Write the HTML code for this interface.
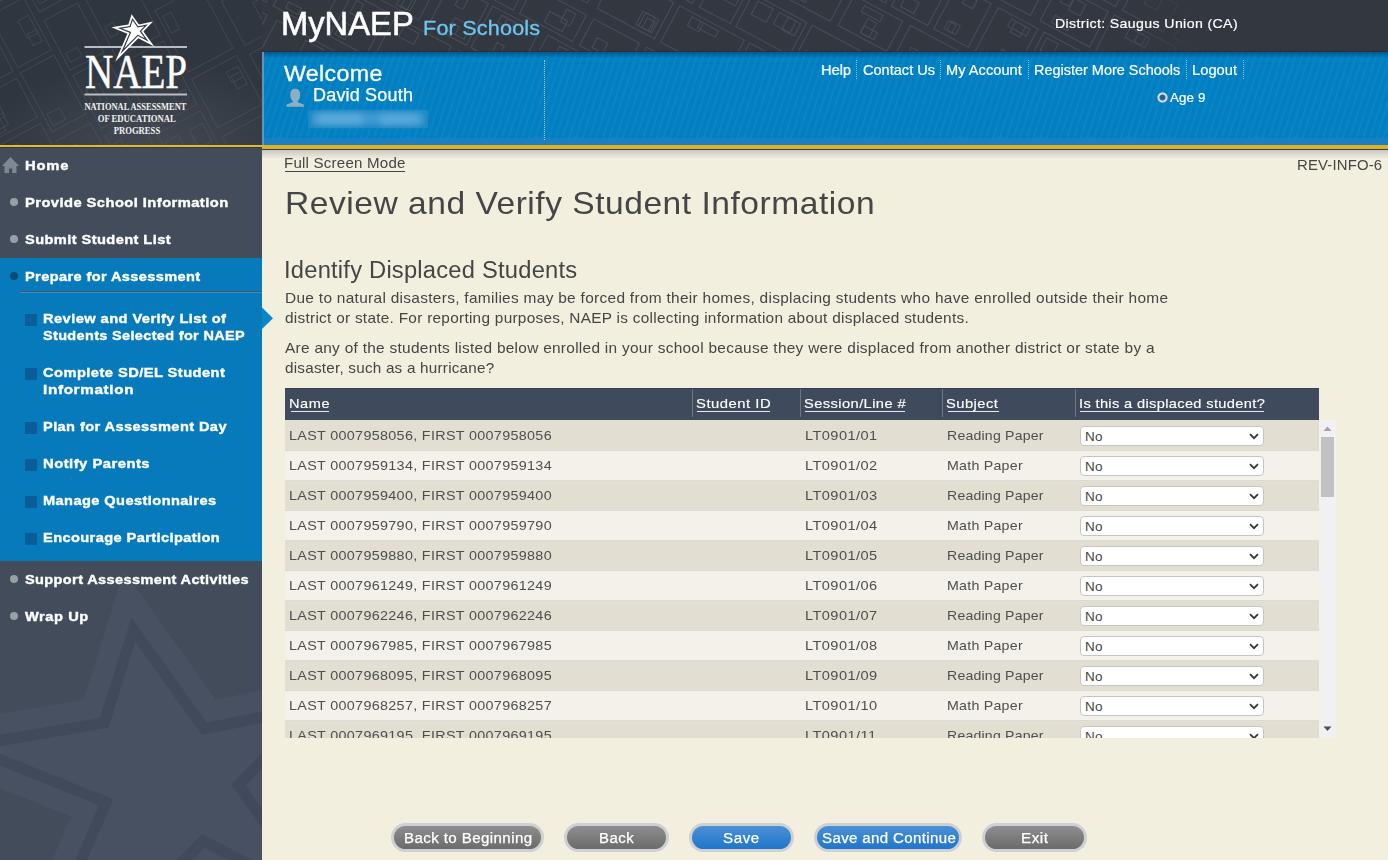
<!DOCTYPE html><html><head><meta charset="utf-8"><style>
*{margin:0;padding:0;box-sizing:border-box}
html,body{width:1388px;height:860px;overflow:hidden}
body{position:relative;background:#f3efdf;font-family:"Liberation Sans", sans-serif}
.t{position:absolute;white-space:nowrap;font-family:"Liberation Sans", sans-serif}
.a{position:absolute}
</style></head><body><div class="a" style="left:0;top:0;width:1388px;height:52px;background:#333840;overflow:hidden"><svg class="a" style="left:0;top:0" width="1388" height="52" viewBox="0 0 1388 52"><g transform="rotate(28)" fill="none" stroke="#474e58" stroke-width="1" opacity="1.0"><rect x="1241" y="-817" width="74" height="40"/><rect x="1254" y="-792" width="9" height="12"/><rect x="1279" y="-791" width="9" height="10"/><rect x="1268" y="-789" width="13" height="9"/><rect x="1142" y="-767" width="72" height="50"/><rect x="1154" y="-763" width="15" height="13"/><rect x="1175" y="-733" width="15" height="11"/><rect x="1153" y="-763" width="20" height="8"/><rect x="1223" y="-767" width="72" height="50"/><rect x="1256" y="-735" width="16" height="14"/><rect x="1242" y="-763" width="16" height="16"/><rect x="1236" y="-763" width="12" height="14"/><rect x="1005" y="-708" width="71" height="54"/><rect x="1054" y="-704" width="14" height="8"/><rect x="1035" y="-670" width="17" height="13"/><rect x="1045" y="-669" width="17" height="11"/><rect x="1086" y="-708" width="39" height="54"/><rect x="1095" y="-670" width="19" height="12"/><rect x="1132" y="-708" width="50" height="54"/><rect x="1160" y="-704" width="9" height="12"/><rect x="1191" y="-708" width="70" height="54"/><rect x="1212" y="-704" width="14" height="14"/><rect x="1220" y="-666" width="20" height="8"/><rect x="1271" y="-708" width="58" height="54"/><rect x="1302" y="-671" width="10" height="13"/><rect x="1296" y="-704" width="13" height="16"/><rect x="1296" y="-704" width="10" height="11"/><rect x="938" y="-643" width="50" height="36"/><rect x="947" y="-639" width="15" height="8"/><rect x="946" y="-639" width="14" height="9"/><rect x="997" y="-643" width="53" height="36"/><rect x="1013" y="-619" width="9" height="7"/><rect x="1055" y="-643" width="64" height="36"/><rect x="1097" y="-639" width="14" height="11"/><rect x="1130" y="-643" width="45" height="36"/><rect x="1141" y="-639" width="15" height="8"/><rect x="1141" y="-619" width="10" height="7"/><rect x="1185" y="-643" width="54" height="36"/><rect x="1214" y="-639" width="15" height="12"/><rect x="1191" y="-639" width="17" height="10"/><rect x="1247" y="-643" width="39" height="36"/><rect x="1251" y="-639" width="8" height="7"/><rect x="1261" y="-639" width="15" height="11"/><rect x="1254" y="-620" width="21" height="9"/><rect x="1294" y="-643" width="49" height="36"/><rect x="1300" y="-621" width="8" height="10"/><rect x="1312" y="-639" width="12" height="15"/><rect x="1302" y="-623" width="16" height="12"/><rect x="846" y="-602" width="68" height="42"/><rect x="875" y="-598" width="14" height="10"/><rect x="866" y="-598" width="14" height="14"/><rect x="871" y="-578" width="11" height="14"/><rect x="924" y="-602" width="59" height="42"/><rect x="941" y="-598" width="11" height="15"/><rect x="991" y="-602" width="38" height="42"/><rect x="1008" y="-598" width="13" height="14"/><rect x="1041" y="-602" width="74" height="42"/><rect x="1064" y="-578" width="14" height="13"/><rect x="1072" y="-577" width="11" height="13"/><rect x="1059" y="-598" width="19" height="11"/><rect x="1127" y="-602" width="42" height="42"/><rect x="1147" y="-598" width="8" height="8"/><rect x="1174" y="-602" width="65" height="42"/><rect x="1210" y="-572" width="15" height="7"/><rect x="1195" y="-598" width="18" height="10"/><rect x="1251" y="-602" width="53" height="42"/><rect x="1288" y="-579" width="10" height="14"/><rect x="1315" y="-602" width="70" height="42"/><rect x="1339" y="-576" width="21" height="11"/><rect x="1331" y="-574" width="22" height="9"/><rect x="753" y="-549" width="69" height="31"/><rect x="770" y="-545" width="21" height="13"/><rect x="770" y="-545" width="16" height="8"/><rect x="832" y="-549" width="71" height="31"/><rect x="862" y="-545" width="14" height="8"/><rect x="915" y="-549" width="73" height="31"/><rect x="928" y="-532" width="14" height="10"/><rect x="921" y="-536" width="13" height="14"/><rect x="936" y="-529" width="11" height="7"/><rect x="996" y="-549" width="46" height="31"/><rect x="1012" y="-545" width="14" height="11"/><rect x="1054" y="-549" width="64" height="31"/><rect x="1084" y="-545" width="15" height="14"/><rect x="1094" y="-529" width="19" height="7"/><rect x="1076" y="-533" width="18" height="11"/><rect x="1126" y="-549" width="57" height="31"/><rect x="1135" y="-545" width="11" height="16"/><rect x="1193" y="-549" width="63" height="31"/><rect x="1211" y="-545" width="17" height="13"/><rect x="1205" y="-535" width="11" height="13"/><rect x="1266" y="-549" width="70" height="31"/><rect x="1288" y="-545" width="15" height="8"/><rect x="1342" y="-549" width="51" height="31"/><rect x="1355" y="-545" width="12" height="8"/><rect x="690" y="-510" width="45" height="40"/><rect x="700" y="-485" width="22" height="11"/><rect x="712" y="-482" width="19" height="9"/><rect x="741" y="-510" width="52" height="40"/><rect x="750" y="-506" width="20" height="14"/><rect x="756" y="-506" width="13" height="9"/><rect x="759" y="-506" width="11" height="12"/><rect x="804" y="-510" width="63" height="40"/><rect x="826" y="-484" width="8" height="10"/><rect x="832" y="-506" width="13" height="13"/><rect x="873" y="-510" width="44" height="40"/><rect x="883" y="-506" width="9" height="7"/><rect x="889" y="-506" width="14" height="9"/><rect x="928" y="-510" width="56" height="40"/><rect x="948" y="-506" width="13" height="13"/><rect x="939" y="-482" width="18" height="8"/><rect x="937" y="-506" width="10" height="10"/><rect x="991" y="-510" width="70" height="40"/><rect x="1021" y="-506" width="8" height="10"/><rect x="1011" y="-506" width="22" height="11"/><rect x="1070" y="-510" width="52" height="40"/><rect x="1076" y="-483" width="21" height="10"/><rect x="1075" y="-506" width="22" height="13"/><rect x="1075" y="-487" width="20" height="14"/><rect x="1127" y="-510" width="54" height="40"/><rect x="1150" y="-482" width="17" height="8"/><rect x="1136" y="-483" width="20" height="9"/><rect x="1189" y="-510" width="39" height="40"/><rect x="1202" y="-506" width="15" height="15"/><rect x="1211" y="-483" width="9" height="9"/><rect x="1203" y="-484" width="21" height="11"/><rect x="1237" y="-510" width="56" height="40"/><rect x="1260" y="-506" width="16" height="10"/><rect x="590" y="-462" width="60" height="49"/><rect x="595" y="-429" width="20" height="11"/><rect x="657" y="-462" width="60" height="49"/><rect x="686" y="-431" width="9" height="14"/><rect x="696" y="-427" width="17" height="10"/><rect x="691" y="-431" width="20" height="14"/><rect x="726" y="-462" width="57" height="49"/><rect x="738" y="-458" width="14" height="10"/><rect x="752" y="-430" width="18" height="12"/><rect x="790" y="-462" width="41" height="49"/><rect x="798" y="-429" width="15" height="12"/><rect x="809" y="-458" width="14" height="12"/><rect x="803" y="-458" width="16" height="13"/><rect x="838" y="-462" width="39" height="49"/><rect x="850" y="-428" width="10" height="10"/><rect x="847" y="-427" width="9" height="9"/><rect x="851" y="-458" width="12" height="9"/><rect x="885" y="-462" width="45" height="49"/><rect x="907" y="-458" width="11" height="12"/><rect x="908" y="-427" width="11" height="9"/><rect x="902" y="-458" width="21" height="8"/><rect x="937" y="-462" width="53" height="49"/><rect x="942" y="-458" width="13" height="14"/><rect x="999" y="-462" width="75" height="49"/><rect x="1030" y="-432" width="13" height="15"/><rect x="1083" y="-462" width="52" height="49"/><rect x="1092" y="-429" width="12" height="12"/><rect x="1095" y="-458" width="8" height="11"/><rect x="1146" y="-462" width="55" height="49"/><rect x="1157" y="-431" width="20" height="14"/><rect x="477" y="-405" width="73" height="34"/><rect x="536" y="-387" width="10" height="12"/><rect x="488" y="-385" width="10" height="10"/><rect x="518" y="-401" width="15" height="11"/><rect x="560" y="-405" width="36" height="34"/><rect x="576" y="-382" width="15" height="7"/><rect x="601" y="-405" width="62" height="34"/><rect x="633" y="-387" width="19" height="11"/><rect x="645" y="-387" width="12" height="12"/><rect x="669" y="-405" width="74" height="34"/><rect x="701" y="-384" width="11" height="8"/><rect x="752" y="-405" width="55" height="34"/><rect x="775" y="-391" width="10" height="16"/><rect x="766" y="-401" width="21" height="7"/><rect x="775" y="-383" width="15" height="8"/><rect x="816" y="-405" width="54" height="34"/><rect x="838" y="-385" width="21" height="10"/><rect x="827" y="-386" width="12" height="11"/><rect x="854" y="-384" width="9" height="9"/><rect x="877" y="-405" width="43" height="34"/><rect x="893" y="-401" width="16" height="13"/><rect x="897" y="-401" width="11" height="9"/><rect x="932" y="-405" width="53" height="34"/><rect x="945" y="-387" width="20" height="12"/><rect x="945" y="-385" width="19" height="10"/><rect x="995" y="-405" width="46" height="34"/><rect x="1017" y="-401" width="10" height="15"/><rect x="1051" y="-405" width="39" height="34"/><rect x="1065" y="-385" width="15" height="10"/><rect x="1070" y="-401" width="15" height="8"/><rect x="397" y="-359" width="49" height="37"/><rect x="415" y="-355" width="19" height="9"/><rect x="412" y="-335" width="10" height="9"/><rect x="425" y="-355" width="10" height="10"/><rect x="455" y="-359" width="38" height="37"/><rect x="470" y="-333" width="16" height="7"/><rect x="459" y="-340" width="14" height="14"/><rect x="503" y="-359" width="50" height="37"/><rect x="533" y="-355" width="12" height="15"/><rect x="528" y="-336" width="13" height="10"/><rect x="565" y="-359" width="48" height="37"/><rect x="571" y="-337" width="15" height="11"/><rect x="587" y="-355" width="12" height="9"/><rect x="578" y="-340" width="10" height="14"/><rect x="621" y="-359" width="35" height="37"/><rect x="632" y="-355" width="20" height="15"/><rect x="662" y="-359" width="61" height="37"/><rect x="704" y="-355" width="14" height="14"/><rect x="670" y="-355" width="17" height="15"/><rect x="694" y="-355" width="19" height="13"/><rect x="729" y="-359" width="61" height="37"/><rect x="735" y="-334" width="19" height="7"/><rect x="800" y="-359" width="72" height="37"/><rect x="843" y="-337" width="13" height="11"/><rect x="882" y="-359" width="36" height="37"/><rect x="888" y="-355" width="18" height="13"/><rect x="927" y="-359" width="40" height="37"/><rect x="933" y="-338" width="14" height="12"/><rect x="932" y="-340" width="18" height="14"/><rect x="977" y="-359" width="57" height="37"/><rect x="991" y="-337" width="14" height="11"/><rect x="992" y="-355" width="13" height="14"/><rect x="316" y="-314" width="63" height="41"/><rect x="347" y="-310" width="16" height="7"/><rect x="335" y="-310" width="12" height="12"/><rect x="325" y="-287" width="19" height="10"/><rect x="387" y="-314" width="63" height="41"/><rect x="429" y="-310" width="14" height="11"/><rect x="460" y="-314" width="60" height="41"/><rect x="471" y="-310" width="14" height="10"/><rect x="477" y="-310" width="19" height="8"/><rect x="531" y="-314" width="65" height="41"/><rect x="580" y="-288" width="9" height="11"/><rect x="576" y="-292" width="11" height="15"/><rect x="573" y="-292" width="18" height="15"/><rect x="603" y="-314" width="73" height="41"/><rect x="619" y="-310" width="13" height="10"/><rect x="629" y="-310" width="20" height="7"/><rect x="682" y="-314" width="58" height="41"/><rect x="711" y="-291" width="22" height="14"/><rect x="725" y="-291" width="10" height="14"/><rect x="750" y="-314" width="51" height="41"/><rect x="779" y="-285" width="13" height="8"/><rect x="809" y="-314" width="47" height="41"/><rect x="816" y="-287" width="17" height="10"/><rect x="836" y="-284" width="13" height="8"/><rect x="817" y="-310" width="19" height="10"/><rect x="866" y="-314" width="51" height="41"/><rect x="879" y="-310" width="17" height="9"/><rect x="209" y="-262" width="66" height="30"/><rect x="253" y="-258" width="14" height="12"/><rect x="285" y="-262" width="43" height="30"/><rect x="301" y="-258" width="19" height="8"/><rect x="293" y="-258" width="16" height="10"/><rect x="335" y="-262" width="63" height="30"/><rect x="344" y="-258" width="20" height="12"/><rect x="404" y="-262" width="54" height="30"/><rect x="424" y="-258" width="20" height="8"/><rect x="425" y="-258" width="20" height="10"/><rect x="465" y="-262" width="60" height="30"/><rect x="505" y="-258" width="10" height="14"/><rect x="491" y="-248" width="20" height="12"/><rect x="533" y="-262" width="52" height="30"/><rect x="545" y="-247" width="12" height="11"/><rect x="593" y="-262" width="69" height="30"/><rect x="625" y="-258" width="18" height="15"/><rect x="602" y="-258" width="20" height="12"/><rect x="598" y="-251" width="19" height="15"/><rect x="670" y="-262" width="68" height="30"/><rect x="678" y="-258" width="14" height="14"/><rect x="685" y="-258" width="15" height="14"/><rect x="693" y="-250" width="19" height="14"/><rect x="748" y="-262" width="47" height="30"/><rect x="753" y="-258" width="19" height="10"/><rect x="802" y="-262" width="36" height="30"/><rect x="818" y="-243" width="12" height="7"/><rect x="157" y="-226" width="64" height="47"/><rect x="187" y="-192" width="18" height="10"/><rect x="228" y="-226" width="40" height="47"/><rect x="239" y="-190" width="18" height="7"/><rect x="278" y="-226" width="50" height="47"/><rect x="290" y="-222" width="19" height="8"/><rect x="285" y="-222" width="20" height="11"/><rect x="337" y="-226" width="42" height="47"/><rect x="357" y="-195" width="10" height="12"/><rect x="352" y="-195" width="12" height="13"/><rect x="390" y="-226" width="43" height="47"/><rect x="410" y="-198" width="18" height="15"/><rect x="410" y="-192" width="8" height="9"/><rect x="404" y="-222" width="9" height="13"/><rect x="438" y="-226" width="53" height="47"/><rect x="457" y="-222" width="10" height="11"/><rect x="450" y="-222" width="15" height="8"/><rect x="459" y="-196" width="8" height="13"/><rect x="500" y="-226" width="52" height="47"/><rect x="516" y="-222" width="13" height="11"/><rect x="562" y="-226" width="68" height="47"/><rect x="589" y="-197" width="20" height="14"/><rect x="642" y="-226" width="71" height="47"/><rect x="663" y="-222" width="14" height="10"/><rect x="42" y="-171" width="70" height="48"/><rect x="55" y="-135" width="21" height="8"/><rect x="80" y="-167" width="22" height="8"/><rect x="120" y="-171" width="55" height="48"/><rect x="135" y="-137" width="20" height="10"/><rect x="143" y="-167" width="18" height="15"/><rect x="180" y="-171" width="56" height="48"/><rect x="192" y="-136" width="18" height="8"/><rect x="244" y="-171" width="52" height="48"/><rect x="256" y="-134" width="14" height="7"/><rect x="308" y="-171" width="41" height="48"/><rect x="315" y="-167" width="8" height="14"/><rect x="312" y="-142" width="11" height="15"/><rect x="357" y="-171" width="63" height="48"/><rect x="388" y="-136" width="19" height="9"/><rect x="369" y="-167" width="17" height="12"/><rect x="387" y="-141" width="11" height="14"/><rect x="429" y="-171" width="61" height="48"/><rect x="439" y="-139" width="18" height="11"/><rect x="497" y="-171" width="38" height="48"/><rect x="508" y="-139" width="12" height="12"/><rect x="541" y="-171" width="58" height="48"/><rect x="557" y="-167" width="10" height="16"/><rect x="561" y="-167" width="20" height="11"/><rect x="606" y="-171" width="49" height="48"/><rect x="613" y="-143" width="21" height="15"/><rect x="612" y="-136" width="11" height="9"/><rect x="-87" y="-112" width="69" height="54"/><rect x="-66" y="-72" width="14" height="10"/><rect x="-81" y="-108" width="18" height="8"/><rect x="-55" y="-72" width="9" height="10"/><rect x="-9" y="-112" width="64" height="54"/><rect x="10" y="-108" width="8" height="15"/><rect x="4" y="-72" width="17" height="10"/><rect x="66" y="-112" width="51" height="54"/><rect x="92" y="-71" width="19" height="9"/><rect x="74" y="-108" width="11" height="9"/><rect x="127" y="-112" width="72" height="54"/><rect x="154" y="-108" width="18" height="11"/><rect x="166" y="-70" width="15" height="8"/><rect x="206" y="-112" width="37" height="54"/><rect x="216" y="-108" width="20" height="8"/><rect x="254" y="-112" width="65" height="54"/><rect x="289" y="-108" width="20" height="16"/><rect x="329" y="-112" width="66" height="54"/><rect x="339" y="-70" width="14" height="7"/><rect x="345" y="-75" width="16" height="13"/><rect x="373" y="-70" width="11" height="8"/><rect x="405" y="-112" width="70" height="54"/><rect x="453" y="-74" width="15" height="12"/><rect x="484" y="-112" width="61" height="54"/><rect x="504" y="-72" width="12" height="10"/><rect x="-156" y="-52" width="38" height="30"/><rect x="-138" y="-48" width="16" height="8"/><rect x="-139" y="-42" width="13" height="16"/><rect x="-141" y="-34" width="16" height="8"/><rect x="-109" y="-52" width="57" height="30"/><rect x="-78" y="-36" width="20" height="10"/><rect x="-98" y="-48" width="16" height="7"/><rect x="-86" y="-36" width="21" height="10"/><rect x="-47" y="-52" width="56" height="30"/><rect x="-34" y="-48" width="13" height="9"/><rect x="-15" y="-48" width="15" height="16"/><rect x="-36" y="-36" width="17" height="10"/><rect x="20" y="-52" width="51" height="30"/><rect x="48" y="-48" width="9" height="13"/><rect x="82" y="-52" width="68" height="30"/><rect x="89" y="-48" width="13" height="12"/><rect x="106" y="-48" width="16" height="14"/><rect x="96" y="-39" width="20" height="13"/><rect x="160" y="-52" width="69" height="30"/><rect x="167" y="-38" width="10" height="12"/><rect x="238" y="-52" width="39" height="30"/><rect x="244" y="-48" width="14" height="9"/><rect x="249" y="-36" width="21" height="10"/><rect x="285" y="-52" width="64" height="30"/><rect x="315" y="-36" width="20" height="10"/><rect x="330" y="-48" width="9" height="11"/><rect x="324" y="-34" width="13" height="8"/><rect x="356" y="-52" width="38" height="30"/><rect x="362" y="-34" width="21" height="8"/><rect x="362" y="-39" width="15" height="13"/><rect x="404" y="-52" width="42" height="30"/><rect x="418" y="-48" width="17" height="14"/><rect x="415" y="-48" width="15" height="15"/><rect x="-137" y="-16" width="55" height="53"/><rect x="-125" y="-12" width="14" height="13"/><rect x="-132" y="-12" width="21" height="11"/><rect x="-124" y="24" width="20" height="9"/><rect x="-75" y="-16" width="36" height="53"/><rect x="-62" y="21" width="12" height="12"/><rect x="-30" y="-16" width="71" height="53"/><rect x="10" y="-12" width="13" height="13"/><rect x="-9" y="-12" width="14" height="9"/><rect x="50" y="-16" width="38" height="53"/><rect x="56" y="-12" width="22" height="8"/><rect x="64" y="-12" width="17" height="9"/><rect x="98" y="-16" width="47" height="53"/><rect x="106" y="26" width="11" height="7"/><rect x="108" y="18" width="20" height="15"/><rect x="116" y="22" width="10" height="11"/><rect x="155" y="-16" width="44" height="53"/><rect x="167" y="25" width="12" height="9"/><rect x="207" y="-16" width="62" height="53"/><rect x="233" y="19" width="21" height="14"/><rect x="213" y="-12" width="13" height="10"/><rect x="277" y="-16" width="69" height="53"/><rect x="310" y="-12" width="13" height="13"/><rect x="328" y="-12" width="14" height="14"/><rect x="-94" y="46" width="63" height="33"/><rect x="-79" y="50" width="14" height="14"/><rect x="-22" y="46" width="43" height="33"/><rect x="-9" y="50" width="8" height="10"/><rect x="28" y="46" width="41" height="33"/><rect x="33" y="50" width="20" height="10"/><rect x="48" y="50" width="16" height="16"/><rect x="74" y="46" width="61" height="33"/><rect x="106" y="50" width="16" height="8"/><rect x="146" y="46" width="40" height="33"/><rect x="158" y="58" width="15" height="16"/><rect x="192" y="46" width="36" height="33"/><rect x="204" y="64" width="18" height="10"/><rect x="213" y="61" width="8" height="14"/><rect x="207" y="50" width="14" height="12"/><rect x="-91" y="88" width="40" height="52"/><rect x="-86" y="92" width="22" height="15"/><rect x="-43" y="88" width="62" height="52"/><rect x="-36" y="124" width="20" height="12"/><rect x="-12" y="92" width="18" height="7"/><rect x="-4" y="121" width="14" height="15"/><rect x="30" y="88" width="42" height="52"/><rect x="38" y="128" width="14" height="8"/><rect x="40" y="126" width="20" height="10"/><rect x="82" y="88" width="64" height="52"/><rect x="114" y="92" width="14" height="11"/><rect x="-9" y="148" width="55" height="35"/><rect x="-4" y="152" width="12" height="7"/></g></svg><div class="a" style="left:1120px;top:0;width:268px;height:52px;background:linear-gradient(90deg,rgba(51,56,64,0),#333840 80px)"></div></div>
<div class="a" style="left:0;top:0;width:262px;height:145px;background:radial-gradient(ellipse 170px 90px at 150px 150px,#444a54 0%,#30363f 100%);overflow:hidden"><svg class="a" style="left:0;top:0" width="262" height="145" viewBox="0 0 262 145"><g transform="rotate(62)" fill="none" stroke="#59606b" stroke-width="1" opacity="0.38"><rect x="59" y="-354" width="48" height="47"/><rect x="91" y="-327" width="12" height="15"/><rect x="80" y="-350" width="10" height="15"/><rect x="114" y="-354" width="71" height="47"/><rect x="132" y="-350" width="16" height="8"/><rect x="154" y="-321" width="21" height="9"/><rect x="-22" y="-297" width="67" height="45"/><rect x="-18" y="-269" width="20" height="12"/><rect x="51" y="-297" width="47" height="45"/><rect x="79" y="-267" width="10" height="11"/><rect x="56" y="-293" width="14" height="10"/><rect x="103" y="-297" width="71" height="45"/><rect x="152" y="-265" width="13" height="8"/><rect x="118" y="-293" width="11" height="15"/><rect x="185" y="-297" width="49" height="45"/><rect x="207" y="-293" width="8" height="13"/><rect x="209" y="-293" width="11" height="16"/><rect x="242" y="-297" width="68" height="45"/><rect x="259" y="-293" width="20" height="13"/><rect x="249" y="-271" width="21" height="14"/><rect x="2" y="-242" width="38" height="47"/><rect x="14" y="-238" width="16" height="12"/><rect x="45" y="-242" width="52" height="47"/><rect x="73" y="-211" width="12" height="13"/><rect x="60" y="-238" width="15" height="13"/><rect x="51" y="-210" width="11" height="11"/><rect x="105" y="-242" width="50" height="47"/><rect x="121" y="-238" width="18" height="16"/><rect x="165" y="-242" width="74" height="47"/><rect x="169" y="-238" width="18" height="12"/><rect x="247" y="-242" width="56" height="47"/><rect x="283" y="-208" width="14" height="10"/><rect x="315" y="-242" width="62" height="47"/><rect x="329" y="-238" width="19" height="14"/><rect x="340" y="-213" width="10" height="15"/><rect x="350" y="-209" width="21" height="10"/><rect x="-55" y="-183" width="49" height="51"/><rect x="-47" y="-179" width="12" height="10"/><rect x="5" y="-183" width="65" height="51"/><rect x="36" y="-150" width="16" height="14"/><rect x="41" y="-150" width="9" height="15"/><rect x="82" y="-183" width="70" height="51"/><rect x="91" y="-145" width="19" height="9"/><rect x="160" y="-183" width="55" height="51"/><rect x="170" y="-179" width="12" height="13"/><rect x="176" y="-179" width="14" height="11"/><rect x="225" y="-183" width="56" height="51"/><rect x="245" y="-179" width="13" height="11"/><rect x="254" y="-150" width="12" height="15"/><rect x="265" y="-146" width="8" height="11"/><rect x="292" y="-183" width="46" height="51"/><rect x="312" y="-148" width="15" height="12"/><rect x="302" y="-179" width="20" height="8"/><rect x="349" y="-183" width="58" height="51"/><rect x="365" y="-151" width="19" height="15"/><rect x="374" y="-179" width="13" height="15"/><rect x="-90" y="-125" width="48" height="49"/><rect x="-73" y="-94" width="20" height="14"/><rect x="-36" y="-125" width="65" height="49"/><rect x="-8" y="-88" width="19" height="8"/><rect x="-11" y="-121" width="12" height="13"/><rect x="39" y="-125" width="67" height="49"/><rect x="73" y="-89" width="12" height="9"/><rect x="113" y="-125" width="72" height="49"/><rect x="166" y="-121" width="9" height="13"/><rect x="192" y="-125" width="49" height="49"/><rect x="214" y="-88" width="22" height="8"/><rect x="204" y="-121" width="20" height="15"/><rect x="203" y="-94" width="12" height="14"/><rect x="251" y="-125" width="51" height="49"/><rect x="267" y="-121" width="22" height="11"/><rect x="313" y="-125" width="41" height="49"/><rect x="329" y="-92" width="20" height="12"/><rect x="-104" y="-67" width="42" height="38"/><rect x="-97" y="-63" width="18" height="12"/><rect x="-56" y="-67" width="41" height="38"/><rect x="-41" y="-41" width="11" height="7"/><rect x="-51" y="-63" width="14" height="10"/><rect x="-9" y="-67" width="38" height="38"/><rect x="5" y="-50" width="10" height="16"/><rect x="2" y="-63" width="21" height="11"/><rect x="13" y="-44" width="9" height="11"/><rect x="39" y="-67" width="56" height="38"/><rect x="78" y="-46" width="10" height="13"/><rect x="101" y="-67" width="60" height="38"/><rect x="120" y="-48" width="20" height="15"/><rect x="120" y="-42" width="16" height="8"/><rect x="169" y="-67" width="68" height="38"/><rect x="198" y="-63" width="11" height="12"/><rect x="187" y="-46" width="8" height="13"/><rect x="180" y="-41" width="9" height="7"/><rect x="245" y="-67" width="75" height="38"/><rect x="299" y="-42" width="17" height="9"/><rect x="289" y="-63" width="14" height="15"/><rect x="288" y="-63" width="21" height="8"/><rect x="-125" y="-22" width="53" height="38"/><rect x="-112" y="4" width="10" height="8"/><rect x="-93" y="2" width="16" height="10"/><rect x="-87" y="-18" width="9" height="13"/><rect x="-64" y="-22" width="65" height="38"/><rect x="-41" y="-1" width="11" height="13"/><rect x="-47" y="1" width="12" height="11"/><rect x="-59" y="-18" width="18" height="13"/><rect x="9" y="-22" width="59" height="38"/><rect x="43" y="-18" width="13" height="10"/><rect x="27" y="-18" width="20" height="12"/><rect x="74" y="-22" width="67" height="38"/><rect x="123" y="-2" width="13" height="14"/><rect x="151" y="-22" width="70" height="38"/><rect x="163" y="0" width="17" height="11"/><rect x="201" y="-18" width="15" height="11"/><rect x="173" y="-4" width="22" height="16"/><rect x="228" y="-22" width="57" height="38"/><rect x="249" y="4" width="22" height="8"/><rect x="-172" y="22" width="61" height="45"/><rect x="-144" y="26" width="13" height="11"/><rect x="-144" y="48" width="15" height="15"/><rect x="-103" y="22" width="59" height="45"/><rect x="-85" y="52" width="13" height="11"/><rect x="-35" y="22" width="48" height="45"/><rect x="-26" y="26" width="9" height="15"/><rect x="21" y="22" width="48" height="45"/><rect x="32" y="26" width="17" height="13"/><rect x="77" y="22" width="44" height="45"/><rect x="90" y="50" width="15" height="14"/><rect x="96" y="56" width="22" height="7"/><rect x="101" y="51" width="13" height="12"/><rect x="128" y="22" width="66" height="45"/><rect x="135" y="52" width="12" height="11"/><rect x="199" y="22" width="45" height="45"/><rect x="210" y="48" width="19" height="15"/><rect x="213" y="26" width="12" height="13"/><rect x="251" y="22" width="45" height="45"/><rect x="271" y="49" width="12" height="14"/><rect x="-64" y="77" width="50" height="40"/><rect x="-43" y="81" width="11" height="15"/><rect x="-52" y="98" width="22" height="15"/><rect x="-38" y="81" width="10" height="9"/><rect x="-5" y="77" width="41" height="40"/><rect x="5" y="104" width="13" height="8"/><rect x="17" y="97" width="10" height="16"/><rect x="22" y="81" width="9" height="14"/><rect x="47" y="77" width="65" height="40"/><rect x="93" y="81" width="10" height="14"/><rect x="54" y="100" width="21" height="13"/><rect x="122" y="77" width="67" height="40"/><rect x="130" y="99" width="20" height="14"/><rect x="156" y="104" width="13" height="9"/><rect x="149" y="101" width="12" height="12"/><rect x="196" y="77" width="46" height="40"/><rect x="203" y="104" width="21" height="8"/><rect x="210" y="81" width="20" height="15"/><rect x="-4" y="126" width="56" height="33"/><rect x="-0" y="130" width="19" height="13"/><rect x="32" y="141" width="9" height="14"/><rect x="13" y="145" width="14" height="10"/><rect x="63" y="126" width="45" height="33"/><rect x="77" y="143" width="16" height="12"/><rect x="115" y="126" width="61" height="33"/><rect x="138" y="147" width="10" height="8"/><rect x="129" y="130" width="11" height="15"/><rect x="186" y="126" width="45" height="33"/><rect x="194" y="130" width="16" height="12"/><rect x="209" y="145" width="11" height="10"/><rect x="204" y="130" width="11" height="7"/><rect x="76" y="165" width="37" height="33"/><rect x="100" y="169" width="9" height="11"/><rect x="118" y="165" width="52" height="33"/><rect x="127" y="169" width="17" height="8"/><rect x="134" y="169" width="8" height="10"/></g></svg></div>
<svg class="a" style="left:70px;top:5px" width="130" height="140" viewBox="70 5 130 140">
<rect x="84.5" y="46" width="102.5" height="2" fill="#b9bcc1"/>
<rect x="84.5" y="93.5" width="102.5" height="2" fill="#b9bcc1"/>
<polygon points="131.60,14.20 138.90,24.40 153.00,21.50 143.40,31.40 154.30,46.50 138.30,38.20 115.20,61.80 127.40,33.70 111.40,27.30 128.40,24.40" fill="#ffffff"/>
<polygon points="132.20,17.96 138.16,26.29 147.94,24.28 141.19,31.24 148.74,41.70 137.97,36.11 120.43,54.03 129.66,32.77 117.63,27.96 129.71,25.90" fill="#333944"/>
<polygon points="132.63,20.62 137.64,27.62 144.37,26.24 139.63,31.13 144.81,38.31 137.73,34.64 124.12,48.54 131.25,32.12 122.03,28.43 130.64,26.96" fill="#ffffff"/>
<text x="84.9" y="87.7" font-family="Liberation Serif" font-size="47.5" fill="#fbfbfb" stroke="#fbfbfb" stroke-width="0.45" textLength="102.2" lengthAdjust="spacingAndGlyphs">NAEP</text>
<text x="84.4" y="110.1" font-family="Liberation Serif" font-weight="bold" font-size="9.3" fill="#f2f2f2" textLength="102" lengthAdjust="spacingAndGlyphs">NATIONAL ASSESSMENT</text>
<text x="97.7" y="122" font-family="Liberation Serif" font-weight="bold" font-size="9.3" fill="#f2f2f2" textLength="78.2" lengthAdjust="spacingAndGlyphs">OF EDUCATIONAL</text>
<text x="113.7" y="133.6" font-family="Liberation Serif" font-weight="bold" font-size="9.3" fill="#f2f2f2" textLength="46.5" lengthAdjust="spacingAndGlyphs">PROGRESS</text>
</svg>
<div class="a" style="left:262px;top:52px;width:1126px;height:86px;background-color:#027fc1;background-image:repeating-linear-gradient(108deg,rgba(255,255,255,0) 0px,rgba(255,255,255,0) 3.6px,rgba(40,175,240,0.13) 4.4px,rgba(40,175,240,0.13) 5.6px,rgba(255,255,255,0) 6.4px)"></div>
<div class="a" style="left:262px;top:51px;width:1126px;height:1px;background:#2d3038"></div>
<div class="a" style="left:262px;top:52px;width:1126px;height:6px;background:linear-gradient(rgba(0,30,60,0.4),rgba(0,30,60,0))"></div>
<div class="a" style="left:262px;top:138px;width:1126px;height:7px;background:#1a80c1"></div>
<div class="a" style="left:262px;top:52px;width:2px;height:93px;background:#5e95bf"></div>
<div class="a" style="left:544px;top:60px;width:0;height:80px;border-left:1px dotted #9ccbea"></div>
<div class="a" style="left:0;top:145px;width:262px;height:2px;background:#e8b921"></div>
<div class="a" style="left:0;top:147px;width:262px;height:1px;background:#2b3a55"></div>
<div class="a" style="left:262px;top:145px;width:1126px;height:4px;background:#dcb227"></div>
<div class="a" style="left:262px;top:149px;width:1126px;height:1px;background:#3c4044"></div>
<div class="a" style="left:262px;top:150px;width:1126px;height:9px;background:linear-gradient(#c6c7c6,#f3efdf)"></div>
<div class="a" style="left:0;top:148px;width:262px;height:712px;background:#434c5b;overflow:hidden"><svg class="a" style="left:0;top:0" width="262" height="712" viewBox="0 148 262 712">
<polygon points="124.00,571.00 215.98,699.52 393.64,662.98 272.68,787.72 410.02,977.98 208.42,873.40 -82.64,1170.76 71.08,816.70 -130.52,736.06 83.68,699.52" fill="#475162"/>
<polygon points="131.43,617.47 206.84,722.84 331.13,697.28 245.35,785.74 341.32,918.68 204.29,847.60 -18.07,1074.77 98.95,805.23 -53.54,744.23 99.87,718.06" fill="#414a5a"/>
<polygon points="135.32,641.81 202.06,735.05 298.39,715.24 231.03,784.70 305.33,887.62 202.12,834.08 15.75,1024.49 113.55,799.22 -13.22,748.51 108.35,727.77" fill="#475162"/>
</svg></div>
<div class="a" style="left:0;top:258px;width:262px;height:303px;background:#077abc"></div>
<div class="a" style="left:20px;top:291px;width:242px;height:1px;background:#45586a"></div>
<div class="a" style="left:20px;top:292px;width:242px;height:1px;background:#3b8dc4"></div>
<svg class="a" style="left:262px;top:307px" width="12" height="23" viewBox="0 0 12 23"><polygon points="0,0.5 11,11.3 0,22" fill="#0887ca"/></svg>
<svg class="a" style="left:2px;top:157px" width="17" height="16" viewBox="0 0 17 16"><polygon points="8.5,0 17,9 14.5,9 14.5,16 10.2,16 10.2,11.5 7,11.5 7,16 2.5,16 2.5,9 0,9" fill="#7f8793"/></svg>
<div class="t" style="left:24.90px;top:159px;font-size:13.5px;line-height:13.5px;color:#ffffff;font-weight:bold;letter-spacing:0.751px;transform:scaleX(1.0953);transform-origin:0 0;-webkit-text-stroke:0.4px #fff;">Home</div>
<div class="t" style="left:24.91px;top:196px;font-size:13.5px;line-height:13.5px;color:#ffffff;font-weight:bold;letter-spacing:0.409px;transform:scaleX(1.0894);transform-origin:0 0;-webkit-text-stroke:0.4px #fff;">Provide School Information</div>
<div class="t" style="left:24.92px;top:233px;font-size:13.5px;line-height:13.5px;color:#ffffff;font-weight:bold;letter-spacing:0.384px;transform:scaleX(1.0834);transform-origin:0 0;-webkit-text-stroke:0.4px #fff;">Submit Student List</div>
<div class="t" style="left:24.92px;top:270px;font-size:13.5px;line-height:13.5px;color:#ffffff;font-weight:bold;letter-spacing:0.372px;transform:scaleX(1.0771);transform-origin:0 0;-webkit-text-stroke:0.4px #fff;">Prepare for Assessment</div>
<div class="t" style="left:42.91px;top:312px;font-size:13.5px;line-height:13.5px;color:#ffffff;font-weight:bold;letter-spacing:0.38px;transform:scaleX(1.0878);transform-origin:0 0;-webkit-text-stroke:0.4px #fff;">Review and Verify List of</div>
<div class="t" style="left:42.93px;top:329px;font-size:13.5px;line-height:13.5px;color:#ffffff;font-weight:bold;letter-spacing:0.334px;transform:scaleX(1.0707);transform-origin:0 0;-webkit-text-stroke:0.4px #fff;">Students Selected for NAEP</div>
<div class="t" style="left:42.91px;top:366px;font-size:13.5px;line-height:13.5px;color:#ffffff;font-weight:bold;letter-spacing:0.42px;transform:scaleX(1.085);transform-origin:0 0;-webkit-text-stroke:0.4px #fff;">Complete SD/EL Student</div>
<div class="t" style="left:42.87px;top:383px;font-size:13.5px;line-height:13.5px;color:#ffffff;font-weight:bold;letter-spacing:0.602px;transform:scaleX(1.128);transform-origin:0 0;-webkit-text-stroke:0.4px #fff;">Information</div>
<div class="t" style="left:42.92px;top:420px;font-size:13.5px;line-height:13.5px;color:#ffffff;font-weight:bold;letter-spacing:0.381px;transform:scaleX(1.0797);transform-origin:0 0;-webkit-text-stroke:0.4px #fff;">Plan for Assessment Day</div>
<div class="t" style="left:42.90px;top:457px;font-size:13.5px;line-height:13.5px;color:#ffffff;font-weight:bold;letter-spacing:0.438px;transform:scaleX(1.0963);transform-origin:0 0;-webkit-text-stroke:0.4px #fff;">Notify Parents</div>
<div class="t" style="left:42.92px;top:494px;font-size:13.5px;line-height:13.5px;color:#ffffff;font-weight:bold;letter-spacing:0.398px;transform:scaleX(1.0801);transform-origin:0 0;-webkit-text-stroke:0.4px #fff;">Manage Questionnaires</div>
<div class="t" style="left:42.92px;top:531px;font-size:13.5px;line-height:13.5px;color:#ffffff;font-weight:bold;letter-spacing:0.372px;transform:scaleX(1.0813);transform-origin:0 0;-webkit-text-stroke:0.4px #fff;">Encourage Participation</div>
<div class="t" style="left:24.92px;top:573px;font-size:13.5px;line-height:13.5px;color:#ffffff;font-weight:bold;letter-spacing:0.352px;transform:scaleX(1.0764);transform-origin:0 0;-webkit-text-stroke:0.4px #fff;">Support Assessment Activities</div>
<div class="t" style="left:24.92px;top:610px;font-size:13.5px;line-height:13.5px;color:#ffffff;font-weight:bold;letter-spacing:0.512px;transform:scaleX(1.0849);transform-origin:0 0;-webkit-text-stroke:0.4px #fff;">Wrap Up</div>
<div class="a" style="left:10px;top:198px;width:8px;height:8px;border-radius:50%;background:#9a9fa7"></div>
<div class="a" style="left:10px;top:235px;width:8px;height:8px;border-radius:50%;background:#9a9fa7"></div>
<div class="a" style="left:10px;top:272px;width:8px;height:8px;border-radius:50%;background:#0c4c78"></div>
<div class="a" style="left:10px;top:575px;width:8px;height:8px;border-radius:50%;background:#9a9fa7"></div>
<div class="a" style="left:10px;top:612px;width:8px;height:8px;border-radius:50%;background:#9a9fa7"></div>
<div class="a" style="left:25px;top:314px;width:12px;height:12px;background:#0a5e98"></div>
<div class="a" style="left:25px;top:368px;width:12px;height:12px;background:#0a5e98"></div>
<div class="a" style="left:25px;top:422px;width:12px;height:12px;background:#0a5e98"></div>
<div class="a" style="left:25px;top:459px;width:12px;height:12px;background:#0a5e98"></div>
<div class="a" style="left:25px;top:496px;width:12px;height:12px;background:#0a5e98"></div>
<div class="a" style="left:25px;top:533px;width:12px;height:12px;background:#0a5e98"></div>
<div class="t" style="left:281.11px;top:6px;font-size:34px;line-height:34px;color:#ffffff;font-weight:normal;letter-spacing:0.0px;transform:scaleX(0.9624);transform-origin:0 0;-webkit-text-stroke:0.6px #fff;">MyNAEP</div>
<div class="t" style="left:422.95px;top:17px;font-size:21px;line-height:21px;color:#6ec6f1;font-weight:normal;letter-spacing:0.197px;transform:scaleX(1.0273);transform-origin:0 0;-webkit-text-stroke:0.3px #6ec6f1;">For Schools</div>
<div class="t" style="left:1054.91px;top:17px;font-size:13px;line-height:13px;color:#ffffff;font-weight:normal;letter-spacing:0.346px;transform:scaleX(1.0873);transform-origin:0 0;-webkit-text-stroke:0.2px #fff;">District: Saugus Union (CA)</div>
<div class="t" style="left:283.94px;top:63px;font-size:22.5px;line-height:22.5px;color:#ffffff;font-weight:normal;letter-spacing:0.328px;transform:scaleX(1.0323);transform-origin:0 0;-webkit-text-stroke:0.3px #fff;">Welcome</div>
<div class="t" style="left:312.97px;top:87px;font-size:17.5px;line-height:17.5px;color:#ffffff;font-weight:normal;letter-spacing:0.177px;transform:scaleX(1.0288);transform-origin:0 0;-webkit-text-stroke:0.25px #fff;">David South</div>
<svg class="a" style="left:285px;top:88px" width="20" height="19" viewBox="285 88 20 19"><path d="M290.3,94.8 C290.3,90.6 292,88.8 295.2,88.8 C298.4,88.8 300.1,90.6 300.1,94.8 C300.1,98 298.8,100.2 297.6,101 L297.6,102.2 L303.2,104.2 C303.8,104.6 304,105.5 304,106.8 L286.2,106.8 C286.2,105.5 286.5,104.6 287.1,104.2 L292.8,102.2 L292.8,101 C291.6,100.2 290.3,98 290.3,94.8 Z" fill="#8eaec2"/></svg>
<div class="a" style="left:308px;top:110px;width:120px;height:18px;background:#1f87c5"></div>
<div class="a" style="left:312px;top:113px;width:112px;height:12px;background:#3f9ad2;filter:blur(2.5px)"></div>
<div class="a" style="left:318px;top:114px;width:44px;height:10px;background:#5aaad9;filter:blur(3px)"></div>
<div class="a" style="left:380px;top:114px;width:38px;height:10px;background:#56a8d8;filter:blur(3px)"></div>
<div class="t" style="left:821.00px;top:63px;font-size:14.5px;line-height:14.5px;color:#ffffff;font-weight:normal;letter-spacing:0.0px;-webkit-text-stroke:0.2px #fff;">Help</div>
<div class="t" style="left:862.50px;top:63px;font-size:14.5px;line-height:14.5px;color:#ffffff;font-weight:normal;letter-spacing:0.013px;transform:scaleX(1.0026);transform-origin:0 0;-webkit-text-stroke:0.2px #fff;">Contact Us</div>
<div class="t" style="left:945.99px;top:63px;font-size:14.5px;line-height:14.5px;color:#ffffff;font-weight:normal;letter-spacing:0.035px;transform:scaleX(1.0065);transform-origin:0 0;-webkit-text-stroke:0.2px #fff;">My Account</div>
<div class="t" style="left:1034.00px;top:63px;font-size:14.5px;line-height:14.5px;color:#ffffff;font-weight:normal;letter-spacing:-0.008px;transform:scaleX(0.9983);transform-origin:0 0;-webkit-text-stroke:0.2px #fff;">Register More Schools</div>
<div class="t" style="left:1191.99px;top:63px;font-size:14.5px;line-height:14.5px;color:#ffffff;font-weight:normal;letter-spacing:0.056px;transform:scaleX(1.0097);transform-origin:0 0;-webkit-text-stroke:0.2px #fff;">Logout</div>
<div class="a" style="left:856px;top:60px;width:0;height:19px;border-left:1px dotted #8cc2e6"></div>
<div class="a" style="left:940px;top:60px;width:0;height:19px;border-left:1px dotted #8cc2e6"></div>
<div class="a" style="left:1028px;top:60px;width:0;height:19px;border-left:1px dotted #8cc2e6"></div>
<div class="a" style="left:1186px;top:60px;width:0;height:19px;border-left:1px dotted #8cc2e6"></div>
<div class="a" style="left:1243px;top:60px;width:0;height:19px;border-left:1px dotted #8cc2e6"></div>
<div class="a" style="left:1157px;top:92px;width:11px;height:11px;border-radius:50%;background:radial-gradient(circle,#1b5a94 0,#1b6aa8 2.6px,#dcd8d0 3.4px,#dcd8d0 4.7px,rgba(220,216,208,0) 5.6px)"></div>
<div class="t" style="left:1170.47px;top:91px;font-size:13px;line-height:13px;color:#ffffff;font-weight:normal;letter-spacing:0.138px;transform:scaleX(1.0252);transform-origin:0 0;-webkit-text-stroke:0.2px #fff;">Age 9</div>
<div class="t" style="left:284.46px;top:156px;font-size:14.5px;line-height:14.5px;color:#454545;font-weight:normal;letter-spacing:0.201px;transform:scaleX(1.0407);transform-origin:0 0;">Full Screen Mode</div>
<div class="a" style="left:285px;top:171px;width:120px;height:1px;background:#3e4650"></div>
<div class="t" style="left:1296.97px;top:158px;font-size:14.5px;line-height:14.5px;color:#454545;font-weight:normal;letter-spacing:0.162px;transform:scaleX(1.0275);transform-origin:0 0;">REV-INFO-6</div>
<div class="t" style="left:284.85px;top:187px;font-size:32px;line-height:32px;color:#454545;font-weight:normal;letter-spacing:0.488px;transform:scaleX(1.0493);transform-origin:0 0;">Review and Verify Student Information</div>
<div class="t" style="left:283.94px;top:259px;font-size:23px;line-height:23px;color:#454545;font-weight:normal;letter-spacing:0.217px;transform:scaleX(1.0308);transform-origin:0 0;">Identify Displaced Students</div>
<div class="t" style="left:284.94px;top:291px;font-size:14.5px;line-height:14.5px;color:#454545;font-weight:normal;letter-spacing:0.278px;transform:scaleX(1.0647);transform-origin:0 0;">Due to natural disasters, families may be forced from their homes, displacing students who have enrolled outside their home</div>
<div class="t" style="left:284.94px;top:311px;font-size:14.5px;line-height:14.5px;color:#454545;font-weight:normal;letter-spacing:0.254px;transform:scaleX(1.061);transform-origin:0 0;">district or state. For reporting purposes, NAEP is collecting information about displaced students.</div>
<div class="t" style="left:284.94px;top:341px;font-size:14.5px;line-height:14.5px;color:#454545;font-weight:normal;letter-spacing:0.266px;transform:scaleX(1.0633);transform-origin:0 0;">Are any of the students listed below enrolled in your school because they were displaced from another district or state by a</div>
<div class="t" style="left:284.95px;top:361px;font-size:14.5px;line-height:14.5px;color:#454545;font-weight:normal;letter-spacing:0.222px;transform:scaleX(1.051);transform-origin:0 0;">disaster, such as a hurricane?</div>
<div class="a" style="left:285px;top:388px;width:1034px;height:32px;background:#3f4b5c;border-top:1px solid #37404c"></div>
<div class="a" style="left:692px;top:389px;width:1px;height:28px;background:#6d7683"></div>
<div class="a" style="left:800px;top:389px;width:1px;height:28px;background:#6d7683"></div>
<div class="a" style="left:942px;top:389px;width:1px;height:28px;background:#6d7683"></div>
<div class="a" style="left:1075px;top:389px;width:1px;height:28px;background:#6d7683"></div>
<div class="t" style="left:289.42px;top:397px;font-size:13.5px;line-height:13.5px;color:#ffffff;font-weight:normal;letter-spacing:0.565px;transform:scaleX(1.0758);transform-origin:0 0;-webkit-text-stroke:0.15px #fff;">Name</div>
<div class="a" style="left:290.5px;top:411px;width:38px;height:1px;background:#e8eaee"></div>
<div class="t" style="left:695.90px;top:397px;font-size:13.5px;line-height:13.5px;color:#ffffff;font-weight:normal;letter-spacing:0.453px;transform:scaleX(1.1002);transform-origin:0 0;-webkit-text-stroke:0.15px #fff;">Student ID</div>
<div class="a" style="left:697px;top:411px;width:73px;height:1px;background:#e8eaee"></div>
<div class="t" style="left:803.91px;top:397px;font-size:13.5px;line-height:13.5px;color:#ffffff;font-weight:normal;letter-spacing:0.383px;transform:scaleX(1.0871);transform-origin:0 0;-webkit-text-stroke:0.15px #fff;">Session/Line #</div>
<div class="a" style="left:805px;top:411px;width:100px;height:1px;background:#e8eaee"></div>
<div class="t" style="left:946.41px;top:397px;font-size:13.5px;line-height:13.5px;color:#ffffff;font-weight:normal;letter-spacing:0.428px;transform:scaleX(1.0888);transform-origin:0 0;-webkit-text-stroke:0.15px #fff;">Subject</div>
<div class="a" style="left:947.5px;top:411px;width:51px;height:1px;background:#e8eaee"></div>
<div class="t" style="left:1078.92px;top:397px;font-size:13.5px;line-height:13.5px;color:#ffffff;font-weight:normal;letter-spacing:0.324px;transform:scaleX(1.0827);transform-origin:0 0;-webkit-text-stroke:0.15px #fff;">Is this a displaced student?</div>
<div class="a" style="left:1080px;top:411px;width:184px;height:1px;background:#e8eaee"></div>
<div class="a" style="left:285px;top:420px;width:1034px;height:318px;overflow:hidden"><div class="a" style="left:0;top:0px;width:1034px;height:30px;background:#e2dfd2"></div><div class="t" style="left:3.94px;top:9px;font-size:13.5px;line-height:13.5px;color:#4e4e4e;font-weight:normal;letter-spacing:0.304px;transform:scaleX(1.0625);transform-origin:0 0;">LAST 0007958056, FIRST 0007958056</div><div class="t" style="left:519.92px;top:9px;font-size:13.5px;line-height:13.5px;color:#4e4e4e;font-weight:normal;letter-spacing:0.409px;transform:scaleX(1.0801);transform-origin:0 0;">LT0901/01</div><div class="t" style="left:661.96px;top:9px;font-size:13.5px;line-height:13.5px;color:#4e4e4e;font-weight:normal;letter-spacing:0.209px;transform:scaleX(1.0425);transform-origin:0 0;">Reading Paper</div><div class="a" style="left:795px;top:6px;width:184px;height:20px;background:#fff;border:1px solid #c5c5c5;border-radius:4px"></div><div class="t" style="left:800.00px;top:10px;font-size:13.5px;line-height:13.5px;color:#444444;font-weight:normal;letter-spacing:0.3px;">No</div><svg class="a" style="left:964px;top:12.5px" width="10" height="7" viewBox="0 0 10 7"><polyline points="1,1.2 5,5.2 9,1.2" fill="none" stroke="#333" stroke-width="1.7"/></svg><div class="a" style="left:0;top:30px;width:1034px;height:30px;background:#f3f1e9"></div><div class="a" style="left:0;top:30px;width:1034px;height:1px;background:#dbdbd8"></div><div class="t" style="left:3.94px;top:39px;font-size:13.5px;line-height:13.5px;color:#4e4e4e;font-weight:normal;letter-spacing:0.304px;transform:scaleX(1.0625);transform-origin:0 0;">LAST 0007959134, FIRST 0007959134</div><div class="t" style="left:519.92px;top:39px;font-size:13.5px;line-height:13.5px;color:#4e4e4e;font-weight:normal;letter-spacing:0.409px;transform:scaleX(1.0801);transform-origin:0 0;">LT0901/02</div><div class="t" style="left:661.95px;top:39px;font-size:13.5px;line-height:13.5px;color:#4e4e4e;font-weight:normal;letter-spacing:0.252px;transform:scaleX(1.0496);transform-origin:0 0;">Math Paper</div><div class="a" style="left:795px;top:36px;width:184px;height:20px;background:#fff;border:1px solid #c5c5c5;border-radius:4px"></div><div class="t" style="left:800.00px;top:40px;font-size:13.5px;line-height:13.5px;color:#444444;font-weight:normal;letter-spacing:0.3px;">No</div><svg class="a" style="left:964px;top:42.5px" width="10" height="7" viewBox="0 0 10 7"><polyline points="1,1.2 5,5.2 9,1.2" fill="none" stroke="#333" stroke-width="1.7"/></svg><div class="a" style="left:0;top:60px;width:1034px;height:30px;background:#e2dfd2"></div><div class="a" style="left:0;top:60px;width:1034px;height:1px;background:#dbdbd8"></div><div class="t" style="left:3.94px;top:69px;font-size:13.5px;line-height:13.5px;color:#4e4e4e;font-weight:normal;letter-spacing:0.304px;transform:scaleX(1.0625);transform-origin:0 0;">LAST 0007959400, FIRST 0007959400</div><div class="t" style="left:519.92px;top:69px;font-size:13.5px;line-height:13.5px;color:#4e4e4e;font-weight:normal;letter-spacing:0.409px;transform:scaleX(1.0801);transform-origin:0 0;">LT0901/03</div><div class="t" style="left:661.96px;top:69px;font-size:13.5px;line-height:13.5px;color:#4e4e4e;font-weight:normal;letter-spacing:0.209px;transform:scaleX(1.0425);transform-origin:0 0;">Reading Paper</div><div class="a" style="left:795px;top:66px;width:184px;height:20px;background:#fff;border:1px solid #c5c5c5;border-radius:4px"></div><div class="t" style="left:800.00px;top:70px;font-size:13.5px;line-height:13.5px;color:#444444;font-weight:normal;letter-spacing:0.3px;">No</div><svg class="a" style="left:964px;top:72.5px" width="10" height="7" viewBox="0 0 10 7"><polyline points="1,1.2 5,5.2 9,1.2" fill="none" stroke="#333" stroke-width="1.7"/></svg><div class="a" style="left:0;top:90px;width:1034px;height:30px;background:#f3f1e9"></div><div class="a" style="left:0;top:90px;width:1034px;height:1px;background:#dbdbd8"></div><div class="t" style="left:3.94px;top:99px;font-size:13.5px;line-height:13.5px;color:#4e4e4e;font-weight:normal;letter-spacing:0.304px;transform:scaleX(1.0625);transform-origin:0 0;">LAST 0007959790, FIRST 0007959790</div><div class="t" style="left:519.92px;top:99px;font-size:13.5px;line-height:13.5px;color:#4e4e4e;font-weight:normal;letter-spacing:0.409px;transform:scaleX(1.0801);transform-origin:0 0;">LT0901/04</div><div class="t" style="left:661.95px;top:99px;font-size:13.5px;line-height:13.5px;color:#4e4e4e;font-weight:normal;letter-spacing:0.252px;transform:scaleX(1.0496);transform-origin:0 0;">Math Paper</div><div class="a" style="left:795px;top:96px;width:184px;height:20px;background:#fff;border:1px solid #c5c5c5;border-radius:4px"></div><div class="t" style="left:800.00px;top:100px;font-size:13.5px;line-height:13.5px;color:#444444;font-weight:normal;letter-spacing:0.3px;">No</div><svg class="a" style="left:964px;top:102.5px" width="10" height="7" viewBox="0 0 10 7"><polyline points="1,1.2 5,5.2 9,1.2" fill="none" stroke="#333" stroke-width="1.7"/></svg><div class="a" style="left:0;top:120px;width:1034px;height:30px;background:#e2dfd2"></div><div class="a" style="left:0;top:120px;width:1034px;height:1px;background:#dbdbd8"></div><div class="t" style="left:3.94px;top:129px;font-size:13.5px;line-height:13.5px;color:#4e4e4e;font-weight:normal;letter-spacing:0.304px;transform:scaleX(1.0625);transform-origin:0 0;">LAST 0007959880, FIRST 0007959880</div><div class="t" style="left:519.92px;top:129px;font-size:13.5px;line-height:13.5px;color:#4e4e4e;font-weight:normal;letter-spacing:0.409px;transform:scaleX(1.0801);transform-origin:0 0;">LT0901/05</div><div class="t" style="left:661.96px;top:129px;font-size:13.5px;line-height:13.5px;color:#4e4e4e;font-weight:normal;letter-spacing:0.209px;transform:scaleX(1.0425);transform-origin:0 0;">Reading Paper</div><div class="a" style="left:795px;top:126px;width:184px;height:20px;background:#fff;border:1px solid #c5c5c5;border-radius:4px"></div><div class="t" style="left:800.00px;top:130px;font-size:13.5px;line-height:13.5px;color:#444444;font-weight:normal;letter-spacing:0.3px;">No</div><svg class="a" style="left:964px;top:132.5px" width="10" height="7" viewBox="0 0 10 7"><polyline points="1,1.2 5,5.2 9,1.2" fill="none" stroke="#333" stroke-width="1.7"/></svg><div class="a" style="left:0;top:150px;width:1034px;height:30px;background:#f3f1e9"></div><div class="a" style="left:0;top:150px;width:1034px;height:1px;background:#dbdbd8"></div><div class="t" style="left:3.94px;top:159px;font-size:13.5px;line-height:13.5px;color:#4e4e4e;font-weight:normal;letter-spacing:0.304px;transform:scaleX(1.0625);transform-origin:0 0;">LAST 0007961249, FIRST 0007961249</div><div class="t" style="left:519.92px;top:159px;font-size:13.5px;line-height:13.5px;color:#4e4e4e;font-weight:normal;letter-spacing:0.409px;transform:scaleX(1.0801);transform-origin:0 0;">LT0901/06</div><div class="t" style="left:661.95px;top:159px;font-size:13.5px;line-height:13.5px;color:#4e4e4e;font-weight:normal;letter-spacing:0.252px;transform:scaleX(1.0496);transform-origin:0 0;">Math Paper</div><div class="a" style="left:795px;top:156px;width:184px;height:20px;background:#fff;border:1px solid #c5c5c5;border-radius:4px"></div><div class="t" style="left:800.00px;top:160px;font-size:13.5px;line-height:13.5px;color:#444444;font-weight:normal;letter-spacing:0.3px;">No</div><svg class="a" style="left:964px;top:162.5px" width="10" height="7" viewBox="0 0 10 7"><polyline points="1,1.2 5,5.2 9,1.2" fill="none" stroke="#333" stroke-width="1.7"/></svg><div class="a" style="left:0;top:180px;width:1034px;height:30px;background:#e2dfd2"></div><div class="a" style="left:0;top:180px;width:1034px;height:1px;background:#dbdbd8"></div><div class="t" style="left:3.94px;top:189px;font-size:13.5px;line-height:13.5px;color:#4e4e4e;font-weight:normal;letter-spacing:0.304px;transform:scaleX(1.0625);transform-origin:0 0;">LAST 0007962246, FIRST 0007962246</div><div class="t" style="left:519.92px;top:189px;font-size:13.5px;line-height:13.5px;color:#4e4e4e;font-weight:normal;letter-spacing:0.409px;transform:scaleX(1.0801);transform-origin:0 0;">LT0901/07</div><div class="t" style="left:661.96px;top:189px;font-size:13.5px;line-height:13.5px;color:#4e4e4e;font-weight:normal;letter-spacing:0.209px;transform:scaleX(1.0425);transform-origin:0 0;">Reading Paper</div><div class="a" style="left:795px;top:186px;width:184px;height:20px;background:#fff;border:1px solid #c5c5c5;border-radius:4px"></div><div class="t" style="left:800.00px;top:190px;font-size:13.5px;line-height:13.5px;color:#444444;font-weight:normal;letter-spacing:0.3px;">No</div><svg class="a" style="left:964px;top:192.5px" width="10" height="7" viewBox="0 0 10 7"><polyline points="1,1.2 5,5.2 9,1.2" fill="none" stroke="#333" stroke-width="1.7"/></svg><div class="a" style="left:0;top:210px;width:1034px;height:30px;background:#f3f1e9"></div><div class="a" style="left:0;top:210px;width:1034px;height:1px;background:#dbdbd8"></div><div class="t" style="left:3.94px;top:219px;font-size:13.5px;line-height:13.5px;color:#4e4e4e;font-weight:normal;letter-spacing:0.304px;transform:scaleX(1.0625);transform-origin:0 0;">LAST 0007967985, FIRST 0007967985</div><div class="t" style="left:519.92px;top:219px;font-size:13.5px;line-height:13.5px;color:#4e4e4e;font-weight:normal;letter-spacing:0.409px;transform:scaleX(1.0801);transform-origin:0 0;">LT0901/08</div><div class="t" style="left:661.95px;top:219px;font-size:13.5px;line-height:13.5px;color:#4e4e4e;font-weight:normal;letter-spacing:0.252px;transform:scaleX(1.0496);transform-origin:0 0;">Math Paper</div><div class="a" style="left:795px;top:216px;width:184px;height:20px;background:#fff;border:1px solid #c5c5c5;border-radius:4px"></div><div class="t" style="left:800.00px;top:220px;font-size:13.5px;line-height:13.5px;color:#444444;font-weight:normal;letter-spacing:0.3px;">No</div><svg class="a" style="left:964px;top:222.5px" width="10" height="7" viewBox="0 0 10 7"><polyline points="1,1.2 5,5.2 9,1.2" fill="none" stroke="#333" stroke-width="1.7"/></svg><div class="a" style="left:0;top:240px;width:1034px;height:30px;background:#e2dfd2"></div><div class="a" style="left:0;top:240px;width:1034px;height:1px;background:#dbdbd8"></div><div class="t" style="left:3.94px;top:249px;font-size:13.5px;line-height:13.5px;color:#4e4e4e;font-weight:normal;letter-spacing:0.304px;transform:scaleX(1.0625);transform-origin:0 0;">LAST 0007968095, FIRST 0007968095</div><div class="t" style="left:519.92px;top:249px;font-size:13.5px;line-height:13.5px;color:#4e4e4e;font-weight:normal;letter-spacing:0.409px;transform:scaleX(1.0801);transform-origin:0 0;">LT0901/09</div><div class="t" style="left:661.96px;top:249px;font-size:13.5px;line-height:13.5px;color:#4e4e4e;font-weight:normal;letter-spacing:0.209px;transform:scaleX(1.0425);transform-origin:0 0;">Reading Paper</div><div class="a" style="left:795px;top:246px;width:184px;height:20px;background:#fff;border:1px solid #c5c5c5;border-radius:4px"></div><div class="t" style="left:800.00px;top:250px;font-size:13.5px;line-height:13.5px;color:#444444;font-weight:normal;letter-spacing:0.3px;">No</div><svg class="a" style="left:964px;top:252.5px" width="10" height="7" viewBox="0 0 10 7"><polyline points="1,1.2 5,5.2 9,1.2" fill="none" stroke="#333" stroke-width="1.7"/></svg><div class="a" style="left:0;top:270px;width:1034px;height:30px;background:#f3f1e9"></div><div class="a" style="left:0;top:270px;width:1034px;height:1px;background:#dbdbd8"></div><div class="t" style="left:3.94px;top:279px;font-size:13.5px;line-height:13.5px;color:#4e4e4e;font-weight:normal;letter-spacing:0.304px;transform:scaleX(1.0625);transform-origin:0 0;">LAST 0007968257, FIRST 0007968257</div><div class="t" style="left:519.92px;top:279px;font-size:13.5px;line-height:13.5px;color:#4e4e4e;font-weight:normal;letter-spacing:0.409px;transform:scaleX(1.0801);transform-origin:0 0;">LT0901/10</div><div class="t" style="left:661.95px;top:279px;font-size:13.5px;line-height:13.5px;color:#4e4e4e;font-weight:normal;letter-spacing:0.252px;transform:scaleX(1.0496);transform-origin:0 0;">Math Paper</div><div class="a" style="left:795px;top:276px;width:184px;height:20px;background:#fff;border:1px solid #c5c5c5;border-radius:4px"></div><div class="t" style="left:800.00px;top:280px;font-size:13.5px;line-height:13.5px;color:#444444;font-weight:normal;letter-spacing:0.3px;">No</div><svg class="a" style="left:964px;top:282.5px" width="10" height="7" viewBox="0 0 10 7"><polyline points="1,1.2 5,5.2 9,1.2" fill="none" stroke="#333" stroke-width="1.7"/></svg><div class="a" style="left:0;top:300px;width:1034px;height:30px;background:#e2dfd2"></div><div class="a" style="left:0;top:300px;width:1034px;height:1px;background:#dbdbd8"></div><div class="t" style="left:3.94px;top:309px;font-size:13.5px;line-height:13.5px;color:#4e4e4e;font-weight:normal;letter-spacing:0.304px;transform:scaleX(1.0625);transform-origin:0 0;">LAST 0007969195, FIRST 0007969195</div><div class="t" style="left:519.92px;top:309px;font-size:13.5px;line-height:13.5px;color:#4e4e4e;font-weight:normal;letter-spacing:0.409px;transform:scaleX(1.0801);transform-origin:0 0;">LT0901/11</div><div class="t" style="left:661.96px;top:309px;font-size:13.5px;line-height:13.5px;color:#4e4e4e;font-weight:normal;letter-spacing:0.209px;transform:scaleX(1.0425);transform-origin:0 0;">Reading Paper</div><div class="a" style="left:795px;top:306px;width:184px;height:20px;background:#fff;border:1px solid #c5c5c5;border-radius:4px"></div><div class="t" style="left:800.00px;top:310px;font-size:13.5px;line-height:13.5px;color:#444444;font-weight:normal;letter-spacing:0.3px;">No</div><svg class="a" style="left:964px;top:312.5px" width="10" height="7" viewBox="0 0 10 7"><polyline points="1,1.2 5,5.2 9,1.2" fill="none" stroke="#333" stroke-width="1.7"/></svg></div>
<div class="a" style="left:1319px;top:420px;width:17px;height:318px;background:#f1f1f1"></div>
<div class="a" style="left:1321px;top:437px;width:13px;height:60px;background:#c1c1c1"></div>
<svg class="a" style="left:1323px;top:426px" width="9" height="6" viewBox="0 0 9 6"><polygon points="4.5,0.5 8.5,5 0.5,5" fill="#a3a3a3"/></svg>
<svg class="a" style="left:1323px;top:726px" width="9" height="6" viewBox="0 0 9 6"><polygon points="0.5,0.5 8.5,0.5 4.5,5" fill="#505050"/></svg>
<div class="a" style="left:391px;top:823px;width:153px;height:29px;border-radius:15px;background:#cfd0d3"></div>
<div class="a" style="left:394px;top:826px;width:147px;height:23px;border-radius:12px;background:linear-gradient(#8e8e8e,#6b6b6b)"></div>
<div class="t" style="left:403.52px;top:831px;font-size:14px;line-height:14px;color:#ffffff;font-weight:normal;letter-spacing:0.363px;transform:scaleX(1.0795);transform-origin:0 0;-webkit-text-stroke:0.25px #fff;">Back to Beginning</div>
<div class="a" style="left:564px;top:823px;width:105px;height:29px;border-radius:15px;background:#cfd0d3"></div>
<div class="a" style="left:567px;top:826px;width:99px;height:23px;border-radius:12px;background:linear-gradient(#8e8e8e,#6b6b6b)"></div>
<div class="t" style="left:598.63px;top:831px;font-size:14px;line-height:14px;color:#ffffff;font-weight:normal;letter-spacing:0.464px;transform:scaleX(1.0704);transform-origin:0 0;-webkit-text-stroke:0.25px #fff;">Back</div>
<div class="a" style="left:689px;top:823px;width:105px;height:29px;border-radius:15px;background:#cfd0d3"></div>
<div class="a" style="left:692px;top:826px;width:99px;height:23px;border-radius:12px;background:linear-gradient(#4b90d6,#1f76c9)"></div>
<div class="t" style="left:723.22px;top:831px;font-size:14px;line-height:14px;color:#ffffff;font-weight:normal;letter-spacing:0.538px;transform:scaleX(1.0818);transform-origin:0 0;-webkit-text-stroke:0.25px #fff;">Save</div>
<div class="a" style="left:814px;top:823px;width:148px;height:29px;border-radius:15px;background:#cfd0d3"></div>
<div class="a" style="left:817px;top:826px;width:142px;height:23px;border-radius:12px;background:linear-gradient(#4b90d6,#1f76c9)"></div>
<div class="t" style="left:821.73px;top:831px;font-size:14px;line-height:14px;color:#ffffff;font-weight:normal;letter-spacing:0.352px;transform:scaleX(1.0731);transform-origin:0 0;-webkit-text-stroke:0.25px #fff;">Save and Continue</div>
<div class="a" style="left:982px;top:823px;width:105px;height:29px;border-radius:15px;background:#cfd0d3"></div>
<div class="a" style="left:985px;top:826px;width:99px;height:23px;border-radius:12px;background:linear-gradient(#8e8e8e,#6b6b6b)"></div>
<div class="t" style="left:1021.21px;top:831px;font-size:14px;line-height:14px;color:#ffffff;font-weight:normal;letter-spacing:0.446px;transform:scaleX(1.0926);transform-origin:0 0;-webkit-text-stroke:0.25px #fff;">Exit</div></body></html>
